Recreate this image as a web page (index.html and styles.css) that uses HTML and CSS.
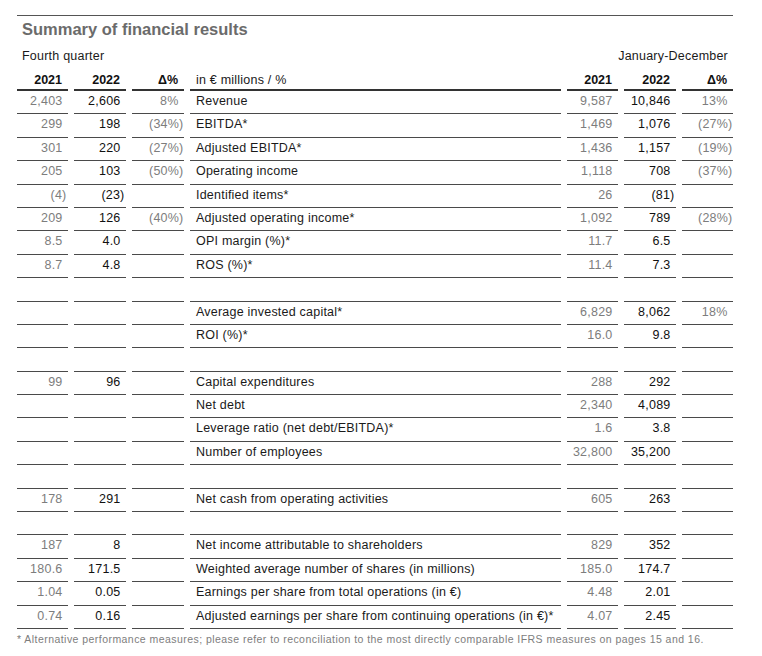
FILE: index.html
```html
<!DOCTYPE html>
<html lang="en">
<head>
<meta charset="utf-8">
<title>Summary of financial results</title>
<link rel="stylesheet" href="styles.css">
</head>
<body>
<div class="page">
  <div class="title">Summary of financial results</div>
  <div class="periods"><span>Fourth quarter</span><span>January-December</span></div>
  <div class="table">
    <div class="row head">
      <div class="c n">2021</div><div class="c n">2022</div><div class="c d">Δ%</div>
      <div class="c lbl">in € millions / %</div>
      <div class="c n">2021</div><div class="c n">2022</div><div class="c d">Δ%</div>
    </div>
    <div class="row">
      <div class="c n old">2,403</div><div class="c n cur">2,606</div><div class="c d">8%</div>
      <div class="c lbl">Revenue</div>
      <div class="c n old">9,587</div><div class="c n cur">10,846</div><div class="c d">13%</div>
    </div>
    <div class="row">
      <div class="c n old">299</div><div class="c n cur">198</div><div class="c d neg">(34%)</div>
      <div class="c lbl">EBITDA*</div>
      <div class="c n old">1,469</div><div class="c n cur">1,076</div><div class="c d neg">(27%)</div>
    </div>
    <div class="row">
      <div class="c n old">301</div><div class="c n cur">220</div><div class="c d neg">(27%)</div>
      <div class="c lbl">Adjusted EBITDA*</div>
      <div class="c n old">1,436</div><div class="c n cur">1,157</div><div class="c d neg">(19%)</div>
    </div>
    <div class="row">
      <div class="c n old">205</div><div class="c n cur">103</div><div class="c d neg">(50%)</div>
      <div class="c lbl">Operating income</div>
      <div class="c n old">1,118</div><div class="c n cur">708</div><div class="c d neg">(37%)</div>
    </div>
    <div class="row">
      <div class="c n old neg">(4)</div><div class="c n cur neg">(23)</div><div class="c d"></div>
      <div class="c lbl">Identified items*</div>
      <div class="c n old">26</div><div class="c n cur neg">(81)</div><div class="c d"></div>
    </div>
    <div class="row">
      <div class="c n old">209</div><div class="c n cur">126</div><div class="c d neg">(40%)</div>
      <div class="c lbl">Adjusted operating income*</div>
      <div class="c n old">1,092</div><div class="c n cur">789</div><div class="c d neg">(28%)</div>
    </div>
    <div class="row">
      <div class="c n old">8.5</div><div class="c n cur">4.0</div><div class="c d"></div>
      <div class="c lbl">OPI margin (%)*</div>
      <div class="c n old">11.7</div><div class="c n cur">6.5</div><div class="c d"></div>
    </div>
    <div class="row">
      <div class="c n old">8.7</div><div class="c n cur">4.8</div><div class="c d"></div>
      <div class="c lbl">ROS (%)*</div>
      <div class="c n old">11.4</div><div class="c n cur">7.3</div><div class="c d"></div>
    </div>
    <div class="row blank"></div>
    <div class="row">
      <div class="c n old"></div><div class="c n cur"></div><div class="c d"></div>
      <div class="c lbl">Average invested capital*</div>
      <div class="c n old">6,829</div><div class="c n cur">8,062</div><div class="c d">18%</div>
    </div>
    <div class="row">
      <div class="c n old"></div><div class="c n cur"></div><div class="c d"></div>
      <div class="c lbl">ROI (%)*</div>
      <div class="c n old">16.0</div><div class="c n cur">9.8</div><div class="c d"></div>
    </div>
    <div class="row blank"></div>
    <div class="row">
      <div class="c n old">99</div><div class="c n cur">96</div><div class="c d"></div>
      <div class="c lbl">Capital expenditures</div>
      <div class="c n old">288</div><div class="c n cur">292</div><div class="c d"></div>
    </div>
    <div class="row">
      <div class="c n old"></div><div class="c n cur"></div><div class="c d"></div>
      <div class="c lbl">Net debt</div>
      <div class="c n old">2,340</div><div class="c n cur">4,089</div><div class="c d"></div>
    </div>
    <div class="row">
      <div class="c n old"></div><div class="c n cur"></div><div class="c d"></div>
      <div class="c lbl">Leverage ratio (net debt/EBITDA)*</div>
      <div class="c n old">1.6</div><div class="c n cur">3.8</div><div class="c d"></div>
    </div>
    <div class="row">
      <div class="c n old"></div><div class="c n cur"></div><div class="c d"></div>
      <div class="c lbl">Number of employees</div>
      <div class="c n old">32,800</div><div class="c n cur">35,200</div><div class="c d"></div>
    </div>
    <div class="row blank"></div>
    <div class="row">
      <div class="c n old">178</div><div class="c n cur">291</div><div class="c d"></div>
      <div class="c lbl">Net cash from operating activities</div>
      <div class="c n old">605</div><div class="c n cur">263</div><div class="c d"></div>
    </div>
    <div class="row blank"></div>
    <div class="row">
      <div class="c n old">187</div><div class="c n cur">8</div><div class="c d"></div>
      <div class="c lbl">Net income attributable to shareholders</div>
      <div class="c n old">829</div><div class="c n cur">352</div><div class="c d"></div>
    </div>
    <div class="row">
      <div class="c n old">180.6</div><div class="c n cur">171.5</div><div class="c d"></div>
      <div class="c lbl">Weighted average number of shares (in millions)</div>
      <div class="c n old">185.0</div><div class="c n cur">174.7</div><div class="c d"></div>
    </div>
    <div class="row">
      <div class="c n old">1.04</div><div class="c n cur">0.05</div><div class="c d"></div>
      <div class="c lbl">Earnings per share from total operations (in €)</div>
      <div class="c n old">4.48</div><div class="c n cur">2.01</div><div class="c d"></div>
    </div>
    <div class="row">
      <div class="c n old">0.74</div><div class="c n cur">0.16</div><div class="c d"></div>
      <div class="c lbl">Adjusted earnings per share from continuing operations (in €)*</div>
      <div class="c n old">4.07</div><div class="c n cur">2.45</div><div class="c d"></div>
    </div>
  </div>
  <p class="note">* Alternative performance measures; please refer to reconciliation to the most directly comparable IFRS measures on pages 15 and 16.</p>
</div>
</body>
</html>
```

FILE: styles.css
```css
html, body {
  margin: 0;
  padding: 0;
  background: #ffffff;
}

body {
  font-family: "Liberation Sans", Arial, Helvetica, sans-serif;
  font-size: 12.5px;
  letter-spacing: 0.22px;
  color: #1a1a1a;
}

.page {
  width: 716px;
  padding: 15px 0 0 17px;
}

.title {
  border-top: 1px solid #555555;
  padding: 3px 5px 0;
  font-size: 16.5px;
  letter-spacing: 0;
  line-height: 20px;
  font-weight: bold;
  color: #6b6b6b;
}

.periods {
  display: flex;
  justify-content: space-between;
  margin-top: 10px;
  padding: 0 5px;
  line-height: 14px;
  color: #1a1a1a;
}

.table {
  margin-top: 8px;
}

.row {
  display: grid;
  grid-template-columns: 51px 52px 52px 371px 51px 52px 51px;
  column-gap: 6px;
}

.c {
  box-sizing: border-box;
  height: 23.4px;
  padding-bottom: 2px;
  line-height: 20.4px;
  border-bottom: 1px solid #4a4a4a;
  white-space: nowrap;
}

.row.blank {
  height: 23.4px;
  box-sizing: border-box;
  background:
    linear-gradient(#4a4a4a, #4a4a4a) 0 100% / 51px 1px no-repeat,
    linear-gradient(#4a4a4a, #4a4a4a) 57px 100% / 52px 1px no-repeat,
    linear-gradient(#4a4a4a, #4a4a4a) 115px 100% / 52px 1px no-repeat,
    linear-gradient(#4a4a4a, #4a4a4a) 173px 100% / 371px 1px no-repeat,
    linear-gradient(#4a4a4a, #4a4a4a) 550px 100% / 51px 1px no-repeat,
    linear-gradient(#4a4a4a, #4a4a4a) 607px 100% / 52px 1px no-repeat,
    linear-gradient(#4a4a4a, #4a4a4a) 665px 100% / 51px 1px no-repeat;
}

.n {
  text-align: right;
  padding-right: 5.5px;
}

.d {
  text-align: right;
  padding-right: 5.5px;
  color: #7d7d7d;
}

.n.neg {
  padding-right: 1.5px;
}

.d.neg {
  padding-right: 0.5px;
}

.lbl {
  padding-left: 6px;
  color: #1a1a1a;
}

.old {
  color: #7d7d7d;
}

.cur {
  color: #111111;
}

.row.head .c {
  height: 20px;
  padding: 2px 0 0;
  line-height: 14px;
  border-bottom: 2px solid #333333;
  font-weight: bold;
  letter-spacing: 0;
  color: #111111;
}

.row.head .n,
.row.head .d {
  padding-right: 6px;
}

.row.head .lbl {
  padding-left: 6px;
  font-weight: normal;
  letter-spacing: 0.22px;
  color: #1a1a1a;
}

.note {
  margin: 4px 0 0;
  font-size: 10.5px;
  letter-spacing: 0.45px;
  line-height: 12px;
  color: #7d7d7d;
  white-space: nowrap;
}
```
